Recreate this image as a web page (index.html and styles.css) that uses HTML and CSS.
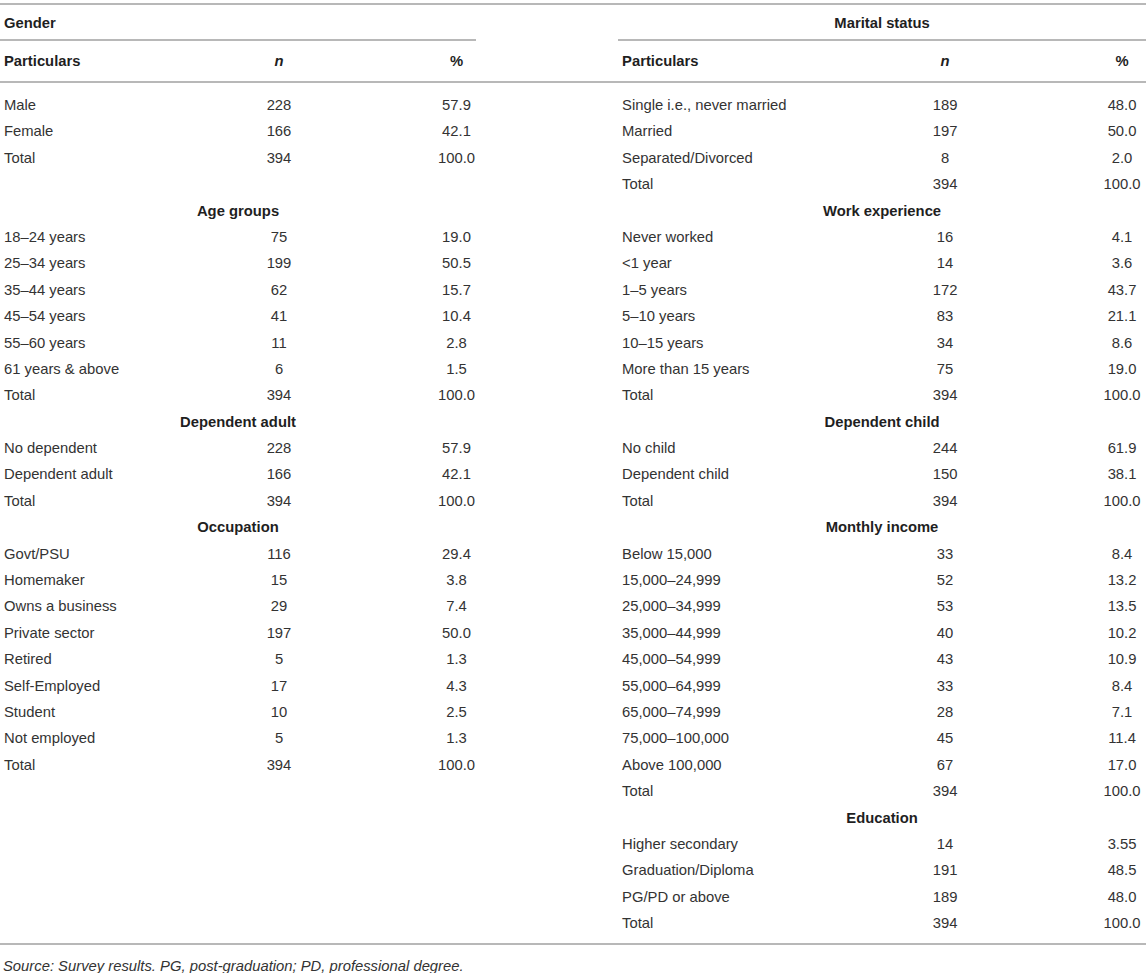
FILE: index.html
```html
<!DOCTYPE html>
<html lang="en">
<head>
    <meta charset="UTF-8">
    <meta name="viewport" content="width=device-width, initial-scale=1.0">
    <title>Respondent profile</title>
    <link rel="stylesheet" href="styles.css">
</head>
<body>
    <div class="table-wrap">
        <table class="profile">
            <colgroup>
                <col class="c-label">
                <col class="c-n">
                <col class="c-pct">
                <col class="c-gap">
                <col class="c-label-r">
                <col class="c-n-r">
                <col class="c-pct-r">
            </colgroup>
            <thead>
                <tr class="group-row">
                    <th colspan="3" class="group left">Gender</th>
                    <th class="gap"></th>
                    <th colspan="3" class="group">Marital status</th>
                </tr>
                <tr class="head-row">
                    <th class="label">Particulars</th>
                    <th><em>n</em></th>
                    <th>%</th>
                    <th class="gap"></th>
                    <th class="label">Particulars</th>
                    <th><em>n</em></th>
                    <th>%</th>
                </tr>
            </thead>
            <tbody>
                <tr class="first">
                    <td class="label">Male</td><td>228</td><td>57.9</td><td class="gap"></td>
                    <td class="label">Single i.e., never married</td><td>189</td><td>48.0</td>
                </tr>
                <tr>
                    <td class="label">Female</td><td>166</td><td>42.1</td><td class="gap"></td>
                    <td class="label">Married</td><td>197</td><td>50.0</td>
                </tr>
                <tr>
                    <td class="label">Total</td><td>394</td><td>100.0</td><td class="gap"></td>
                    <td class="label">Separated/Divorced</td><td>8</td><td>2.0</td>
                </tr>
                <tr>
                    <td class="label"></td><td></td><td></td><td class="gap"></td>
                    <td class="label">Total</td><td>394</td><td>100.0</td>
                </tr>
                <tr>
                    <td colspan="3" class="sub">Age groups</td><td class="gap"></td>
                    <td colspan="3" class="sub">Work experience</td>
                </tr>
                <tr>
                    <td class="label">18–24 years</td><td>75</td><td>19.0</td><td class="gap"></td>
                    <td class="label">Never worked</td><td>16</td><td>4.1</td>
                </tr>
                <tr>
                    <td class="label">25–34 years</td><td>199</td><td>50.5</td><td class="gap"></td>
                    <td class="label">&lt;1 year</td><td>14</td><td>3.6</td>
                </tr>
                <tr>
                    <td class="label">35–44 years</td><td>62</td><td>15.7</td><td class="gap"></td>
                    <td class="label">1–5 years</td><td>172</td><td>43.7</td>
                </tr>
                <tr>
                    <td class="label">45–54 years</td><td>41</td><td>10.4</td><td class="gap"></td>
                    <td class="label">5–10 years</td><td>83</td><td>21.1</td>
                </tr>
                <tr>
                    <td class="label">55–60 years</td><td>11</td><td>2.8</td><td class="gap"></td>
                    <td class="label">10–15 years</td><td>34</td><td>8.6</td>
                </tr>
                <tr>
                    <td class="label">61 years &amp; above</td><td>6</td><td>1.5</td><td class="gap"></td>
                    <td class="label">More than 15 years</td><td>75</td><td>19.0</td>
                </tr>
                <tr>
                    <td class="label">Total</td><td>394</td><td>100.0</td><td class="gap"></td>
                    <td class="label">Total</td><td>394</td><td>100.0</td>
                </tr>
                <tr>
                    <td colspan="3" class="sub">Dependent adult</td><td class="gap"></td>
                    <td colspan="3" class="sub">Dependent child</td>
                </tr>
                <tr>
                    <td class="label">No dependent</td><td>228</td><td>57.9</td><td class="gap"></td>
                    <td class="label">No child</td><td>244</td><td>61.9</td>
                </tr>
                <tr>
                    <td class="label">Dependent adult</td><td>166</td><td>42.1</td><td class="gap"></td>
                    <td class="label">Dependent child</td><td>150</td><td>38.1</td>
                </tr>
                <tr>
                    <td class="label">Total</td><td>394</td><td>100.0</td><td class="gap"></td>
                    <td class="label">Total</td><td>394</td><td>100.0</td>
                </tr>
                <tr>
                    <td colspan="3" class="sub">Occupation</td><td class="gap"></td>
                    <td colspan="3" class="sub">Monthly income</td>
                </tr>
                <tr>
                    <td class="label">Govt/PSU</td><td>116</td><td>29.4</td><td class="gap"></td>
                    <td class="label">Below 15,000</td><td>33</td><td>8.4</td>
                </tr>
                <tr>
                    <td class="label">Homemaker</td><td>15</td><td>3.8</td><td class="gap"></td>
                    <td class="label">15,000–24,999</td><td>52</td><td>13.2</td>
                </tr>
                <tr>
                    <td class="label">Owns a business</td><td>29</td><td>7.4</td><td class="gap"></td>
                    <td class="label">25,000–34,999</td><td>53</td><td>13.5</td>
                </tr>
                <tr>
                    <td class="label">Private sector</td><td>197</td><td>50.0</td><td class="gap"></td>
                    <td class="label">35,000–44,999</td><td>40</td><td>10.2</td>
                </tr>
                <tr>
                    <td class="label">Retired</td><td>5</td><td>1.3</td><td class="gap"></td>
                    <td class="label">45,000–54,999</td><td>43</td><td>10.9</td>
                </tr>
                <tr>
                    <td class="label">Self-Employed</td><td>17</td><td>4.3</td><td class="gap"></td>
                    <td class="label">55,000–64,999</td><td>33</td><td>8.4</td>
                </tr>
                <tr>
                    <td class="label">Student</td><td>10</td><td>2.5</td><td class="gap"></td>
                    <td class="label">65,000–74,999</td><td>28</td><td>7.1</td>
                </tr>
                <tr>
                    <td class="label">Not employed</td><td>5</td><td>1.3</td><td class="gap"></td>
                    <td class="label">75,000–100,000</td><td>45</td><td>11.4</td>
                </tr>
                <tr>
                    <td class="label">Total</td><td>394</td><td>100.0</td><td class="gap"></td>
                    <td class="label">Above 100,000</td><td>67</td><td>17.0</td>
                </tr>
                <tr>
                    <td class="label"></td><td></td><td></td><td class="gap"></td>
                    <td class="label">Total</td><td>394</td><td>100.0</td>
                </tr>
                <tr>
                    <td colspan="3"></td><td class="gap"></td>
                    <td colspan="3" class="sub">Education</td>
                </tr>
                <tr>
                    <td class="label"></td><td></td><td></td><td class="gap"></td>
                    <td class="label">Higher secondary</td><td>14</td><td>3.55</td>
                </tr>
                <tr>
                    <td class="label"></td><td></td><td></td><td class="gap"></td>
                    <td class="label">Graduation/Diploma</td><td>191</td><td>48.5</td>
                </tr>
                <tr>
                    <td class="label"></td><td></td><td></td><td class="gap"></td>
                    <td class="label">PG/PD or above</td><td>189</td><td>48.0</td>
                </tr>
                <tr class="last">
                    <td class="label"></td><td></td><td></td><td class="gap"></td>
                    <td class="label">Total</td><td>394</td><td>100.0</td>
                </tr>
            </tbody>
        </table>
    </div>

    <p class="source"><em>Source: Survey results. PG, post-graduation; PD, professional degree.</em></p>
</body>
</html>
```

FILE: styles.css
```css
body {
    font-family: 'Liberation Sans', Arial, sans-serif;
    font-size: 14.8px;
    margin: 0;
    padding: 3px 0 0 0;
    background-color: #ffffff;
    color: #333333;
}

.table-wrap {
    border-top: 2px solid #b8b8b8;
    border-bottom: 2px solid #b8b8b8;
    padding-bottom: 6px;
}

.profile {
    width: 1146px;
    table-layout: fixed;
    border-collapse: separate;
    border-spacing: 0;
}

.c-label { width: 121px; }
.c-n { width: 316px; }
.c-pct { width: 39px; }
.c-gap { width: 142px; }
.c-label-r { width: 174px; }
.c-n-r { width: 306px; }
.c-pct-r { width: 48px; }

.profile th,
.profile td {
    padding: 0;
    text-align: center;
    white-space: nowrap;
    font-weight: normal;
}

.profile th {
    font-weight: bold;
    color: #1f1f1f;
}

.profile .label {
    text-align: left;
    padding-left: 4px;
}

.group-row th {
    height: 34px;
    line-height: 31px;
    padding-top: 3px;
    box-sizing: border-box;
}

.group-row .group {
    border-bottom: 2px solid #b8b8b8;
}

.group-row .group.left {
    text-align: left;
    padding-left: 4px;
}

.head-row th {
    height: 42px;
    line-height: 40px;
    border-bottom: 2px solid #b8b8b8;
    box-sizing: border-box;
}

.profile tbody td {
    height: 26.39px;
    line-height: 26.39px;
}

.profile tbody tr.first td {
    padding-top: 9px;
}

.profile td.sub {
    font-weight: bold;
    color: #1f1f1f;
}

.source {
    margin: 0;
    padding: 13px 0 0 3px;
    line-height: 17px;
    color: #333333;
}
```
